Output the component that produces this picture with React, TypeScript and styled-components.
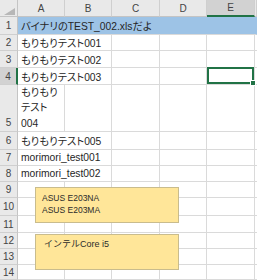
import { Fragment, type ReactNode } from "react";
import styled, { createGlobalStyle } from "styled-components";

const GlobalStyle = createGlobalStyle`
  html, body {
    margin: 0;
    padding: 0;
    background: #ffffff;
    overflow: hidden;
  }
  body {
    font-family: "Liberation Sans", "Noto Sans CJK JP", sans-serif;
  }
`;

const GREEN = "#217346";
const GRID = "#dadada";

const colWidths = [18, 47, 47, 48, 47, 48, 2];
const rowHeights = [17, 18, 16, 17, 17, 47, 18, 16, 16, 16, 18, 17, 16, 16, 15];

const Sheet = styled.div`
  position: relative;
  display: grid;
  grid-template-columns: ${colWidths.map((w) => `${w}px`).join(" ")};
  grid-template-rows: ${rowHeights.map((h) => `${h}px`).join(" ")};
  width: 257px;
  height: 280px;
  overflow: hidden;
  font-size: 10px;
  color: #262626;
`;

const Corner = styled.div`
  background: #e9e9e9;
  border-right: 1px solid #c4c4c4;
  border-bottom: 1px solid #c4c4c4;
  box-sizing: border-box;
  display: flex;
  align-items: flex-end;
  justify-content: flex-end;
  padding: 0 2px 1px 0;
`;

const ColHeader = styled.div<{ $selected?: boolean }>`
  box-sizing: border-box;
  background: ${(p) => (p.$selected ? "#d2d2d2" : "#e9e9e9")};
  border-right: 1px solid #cfcfcf;
  border-bottom: ${(p) => (p.$selected ? `2px solid ${GREEN}` : "1px solid #c4c4c4")};
  display: flex;
  align-items: center;
  justify-content: center;
  color: #444;
  font-size: 10px;
`;

const RowHeader = styled.div<{ $selected?: boolean; $bottom?: boolean }>`
  box-sizing: border-box;
  background: ${(p) => (p.$selected ? "#d2d2d2" : "#e9e9e9")};
  border-bottom: 1px solid #cfcfcf;
  border-right: ${(p) => (p.$selected ? `2px solid ${GREEN}` : "1px solid #c4c4c4")};
  display: flex;
  align-items: ${(p) => (p.$bottom ? "flex-end" : "center")};
  justify-content: center;
  padding-bottom: ${(p) => (p.$bottom ? "1px" : "0")};
  line-height: 15px;
  color: #444;
  font-size: 10px;
`;

const Cell = styled.div<{ $span?: number; $fill?: boolean; $active?: boolean }>`
  position: relative;
  box-sizing: border-box;
  grid-column: span ${(p) => p.$span ?? 1};
  background: ${(p) => (p.$fill ? "#9dc3e6" : "transparent")};
  border-right: 1px solid ${(p) => (p.$fill ? "#9dc3e6" : GRID)};
  border-bottom: 1px solid ${GRID};
  display: flex;
  align-items: center;
  padding-left: 3px;
  white-space: nowrap;
  font-size: 10.3px;
  font-feature-settings: "palt";

  ${(p) =>
    p.$active &&
    `
    z-index: 2;
    &::after {
      content: "";
      position: absolute;
      top: -1px;
      left: 0;
      right: 0;
      bottom: 0;
      border: 2px solid ${GREEN};
    }
  `}
`;

const WrapText = styled.div`
  display: flex;
  flex-direction: column;
  line-height: 15.5px;
`;

const FillHandle = styled.span`
  position: absolute;
  right: -2px;
  bottom: -2px;
  width: 4px;
  height: 4px;
  background: ${GREEN};
  border: 1px solid #fff;
  z-index: 3;
`;

const TextBox = styled.div<{ $top: number; $padTop: number; $padLeft: number; $size: number }>`
  position: absolute;
  left: 35px;
  top: ${(p) => p.$top}px;
  width: 144px;
  height: 36px;
  box-sizing: border-box;
  background: #ffe699;
  border: 1px solid #c9bc8d;
  padding: ${(p) => p.$padTop}px 0 0 ${(p) => p.$padLeft}px;
  font-size: ${(p) => p.$size}px;
  line-height: 12px;
  color: #2b2b2b;
  z-index: 4;
`;

type Row = { a?: string; span?: number; fill?: boolean; wrap?: boolean };

const rows: Row[] = [
  { a: "バイナリのTEST_002.xlsだよ", fill: true },
  { a: "もりもりテスト001", span: 2 },
  { a: "もりもりテスト002", span: 2 },
  { a: "もりもりテスト003", span: 2 },
  { a: "もりもり|テスト|004", wrap: true },
  { a: "もりもりテスト005", span: 2 },
  { a: "morimori_test001", span: 2 },
  { a: "morimori_test002", span: 2 },
  {},
  {},
  {},
  {},
  {},
  {},
];

const cols = ["A", "B", "C", "D", "E"];

function renderCells(row: Row, rowNo: number) {
  const cells: ReactNode[] = [];
  if (row.fill) {
    cells.push(
      <Cell key="a" $span={6} $fill>
        {row.a}
      </Cell>
    );
    return cells;
  }
  const span = row.span ?? 1;
  cells.push(
    <Cell key="a" $span={span}>
      {row.wrap ? (
        <WrapText>
          {(row.a ?? "").split("|").map((t) => (
            <span key={t}>{t}</span>
          ))}
        </WrapText>
      ) : (
        row.a
      )}
    </Cell>
  );
  for (let c = span; c < cols.length; c++) {
    const active = rowNo === 4 && cols[c] === "E";
    cells.push(
      <Cell key={cols[c]} $active={active}>
        {active && <FillHandle />}
      </Cell>
    );
  }
  cells.push(<Cell key="f" />);
  return cells;
}

export default function App() {
  return (
    <>
      <GlobalStyle />
      <Sheet>
        <Corner>
          <svg width="11" height="7" viewBox="0 0 11 7">
            <polygon points="11,0 11,7 0,7" fill="#b7b7b7" />
          </svg>
        </Corner>
        {cols.map((c) => (
          <ColHeader key={c} $selected={c === "E"}>
            {c}
          </ColHeader>
        ))}
        <ColHeader />
        {rows.map((row, i) => (
          <Fragment key={i}>
            <RowHeader $selected={i === 3} $bottom={row.wrap}>
              {i + 1}
            </RowHeader>
            {renderCells(row, i + 1)}
          </Fragment>
        ))}

        <TextBox $top={187} $padTop={4} $padLeft={6} $size={8.5}>
          <div>ASUS E203NA</div>
          <div>ASUS E203MA</div>
        </TextBox>
        <TextBox $top={234} $padTop={3} $padLeft={8} $size={9}>
          <div>インテルCore i5</div>
        </TextBox>
      </Sheet>
    </>
  );
}
